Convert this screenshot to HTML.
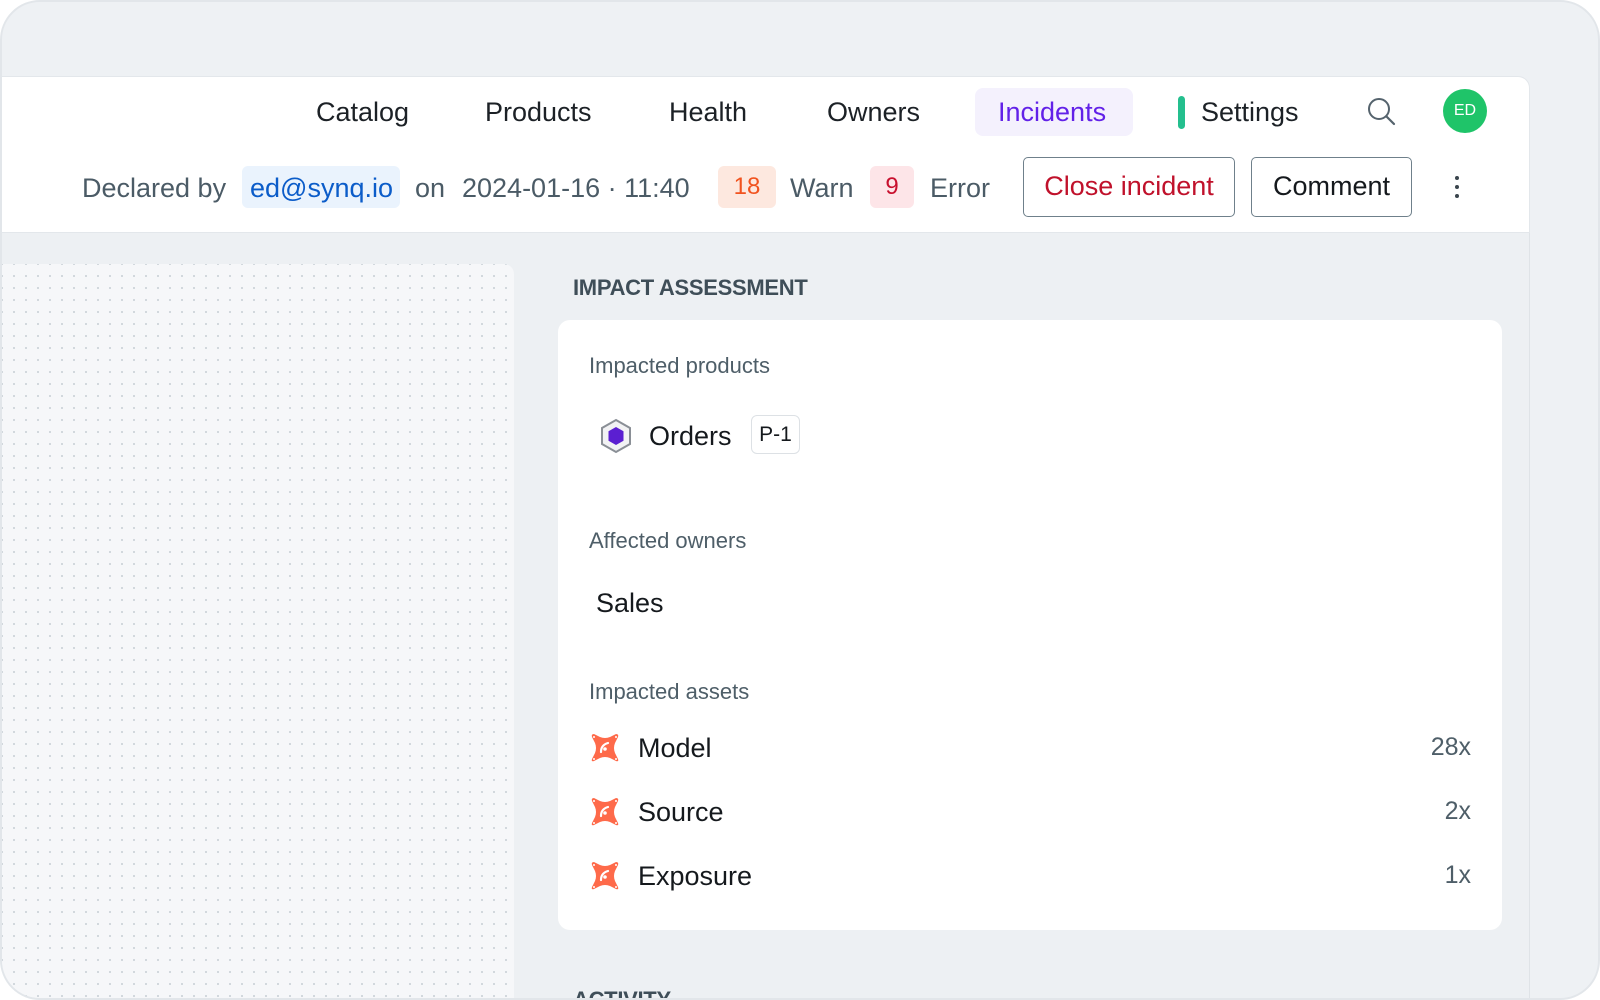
<!DOCTYPE html>
<html><head><meta charset="utf-8"><style>
*{margin:0;padding:0;box-sizing:border-box}
body{width:1600px;height:1000px;overflow:hidden;background:#fff;font-family:"Liberation Sans","DejaVu Sans",sans-serif;position:relative}
.frame{position:absolute;left:0;top:0;width:1600px;height:1000px;background:#eef1f4;border:2px solid #e2e6ea;border-radius:40px;overflow:hidden}
.wrap{position:absolute;left:-2px;top:0;width:1600px;height:1000px}
.a{position:absolute;white-space:nowrap}
.hdr{position:absolute;left:0;top:74px;width:1530px;height:157px;background:#fff;border-top:1px solid #e3e7eb;border-right:1px solid #e3e7eb;border-bottom:1px solid #e3e7eb;border-top-right-radius:12px}
.content{position:absolute;left:0;top:231px;width:1530px;height:800px;background:#edf0f3;border-right:1px solid #dfe3e7}
.nav{font-size:27px;color:#1c2126;top:94px;line-height:32px}
.r2{font-size:27px;color:#4b5b66;top:170px;line-height:32px}
.pill{position:absolute;border-radius:6px}
.btn{position:absolute;top:155px;height:60px;border:1.5px solid #6f808b;border-radius:5px;font-size:27px;line-height:57px;text-align:center}
.dots{position:absolute;left:0;top:262px;width:514px;height:760px;background-color:#f6f7f9;background-image:radial-gradient(#cfd5db 1px,transparent 1.2px);background-size:12px 12px;background-position:8px 6px;border-top-right-radius:10px}
.card{position:absolute;left:558px;top:318px;width:944px;height:610px;background:#fff;border-radius:12px}
.lab{font-size:22px;color:#4e5e68;line-height:26px}
.item{font-size:27px;color:#15191d;line-height:32px}
.cnt{font-size:25px;color:#4e5e68;line-height:30px}
.h{font-size:22px;font-weight:bold;color:#3f4e58;line-height:28px;letter-spacing:-0.3px}
</style></head><body>
<div class="frame"><div class="wrap">
<div class="hdr"></div>
<div class="content"></div>
<div class="dots"></div>

<div class="a nav" style="left:316px">Catalog</div>
<div class="a nav" style="left:485px">Products</div>
<div class="a nav" style="left:669px">Health</div>
<div class="a nav" style="left:827px">Owners</div>
<div class="pill" style="left:975px;top:86px;width:158px;height:48px;background:#f4f1fd;border-radius:8px"></div>
<div class="a nav" style="left:998px;color:#6221e8">Incidents</div>
<div class="pill" style="left:1178px;top:94px;width:7px;height:33px;background:#24bf8e;border-radius:4px"></div>
<div class="a nav" style="left:1201px">Settings</div>
<svg class="a" style="left:1366px;top:94px" width="32" height="32" viewBox="0 0 32 32"><circle cx="13" cy="13" r="10" fill="none" stroke="#55636d" stroke-width="2"/><line x1="20.5" y1="20.5" x2="28" y2="28" stroke="#55636d" stroke-width="2.2" stroke-linecap="round"/></svg>
<div class="pill" style="left:1443px;top:87px;width:44px;height:44px;background:#1fc469;border-radius:50%;color:#fff;font-size:16px;line-height:44px;text-align:center">ED</div>

<div class="a r2" style="left:82px">Declared by</div>
<div class="pill" style="left:242px;top:164px;width:158px;height:42px;background:#eaf3fd"></div>
<div class="a r2" style="left:250px;color:#0b5cc9">ed@synq.io</div>
<div class="a r2" style="left:415px">on</div>
<div class="a r2" style="left:462px">2024-01-16 · 11:40</div>
<div class="pill" style="left:718px;top:164px;width:58px;height:42px;background:#fde8df;color:#f1531f;font-size:24px;line-height:42px;text-align:center">18</div>
<div class="a r2" style="left:790px">Warn</div>
<div class="pill" style="left:870px;top:164px;width:44px;height:42px;background:#fde5e8;color:#c8102e;font-size:24px;line-height:42px;text-align:center">9</div>
<div class="a r2" style="left:930px">Error</div>
<div class="btn" style="left:1023px;width:212px;color:#c0112b">Close incident</div>
<div class="btn" style="left:1251px;width:161px;color:#15191d">Comment</div>
<svg class="a" style="left:1450px;top:172px" width="14" height="28"><circle cx="7" cy="4" r="2" fill="#3a454d"/><circle cx="7" cy="13" r="2" fill="#3a454d"/><circle cx="7" cy="22" r="2" fill="#3a454d"/></svg>

<div class="a h" style="left:573px;top:272px">IMPACT ASSESSMENT</div>
<div class="card"></div>
<div class="a lab" style="left:589px;top:351px">Impacted products</div>
<svg class="a" style="left:599px;top:416px" width="34" height="36" viewBox="0 0 34 36"><polygon points="17,2 31,10 31,26 17,34 3,26 3,10" fill="#f2f2f4" stroke="#8a8f96" stroke-width="2"/><polygon points="17,9 24.5,13.3 24.5,22.7 17,27 9.5,22.7 9.5,13.3" fill="#5b1fd1"/></svg>
<div class="a item" style="left:649px;top:418px">Orders</div>
<div class="pill" style="left:751px;top:413px;width:49px;height:39px;border:1.5px solid #dde1e5;font-size:21px;line-height:38px;text-align:center;color:#15191d">P-1</div>

<div class="a lab" style="left:589px;top:526px">Affected owners</div>
<div class="a item" style="left:596px;top:585px">Sales</div>

<div class="a lab" style="left:589px;top:677px">Impacted assets</div>

<svg width="0" height="0" style="position:absolute"><defs><g id="dbt"><path d="M3 5 Q2 2 5 2 L11 5 Q16 7 21 5 L27 2 Q30 2 29 5 L26 11 Q24 16 26 21 L29 27 Q30 30 27 29 L21 26 Q16 24 11 26 L5 29 Q2 30 3 27 L6 21 Q8 16 6 11 Z" fill="#fe6a4a"/><path d="M12 20 Q12 13 19 11" stroke="#fff" stroke-width="2.2" fill="none" stroke-linecap="round"/><circle cx="16" cy="17" r="1.8" fill="#fff"/><circle cx="5" cy="5" r="1" fill="#fff"/><circle cx="27" cy="5" r="1" fill="#fff"/><circle cx="5" cy="27" r="1" fill="#fff"/><circle cx="27" cy="27" r="1" fill="#fff"/></g></defs></svg>
<svg class="a" style="left:589px;top:730px" width="32" height="32"><use href="#dbt"/></svg>
<div class="a item" style="left:638px;top:730px">Model</div>
<div class="a cnt" style="right:129px;top:730px">28x</div>
<svg class="a" style="left:589px;top:794px" width="32" height="32"><use href="#dbt"/></svg>
<div class="a item" style="left:638px;top:794px">Source</div>
<div class="a cnt" style="right:129px;top:794px">2x</div>
<svg class="a" style="left:589px;top:858px" width="32" height="32"><use href="#dbt"/></svg>
<div class="a item" style="left:638px;top:858px">Exposure</div>
<div class="a cnt" style="right:129px;top:858px">1x</div>

<div class="a h" style="left:573px;top:984px">ACTIVITY</div>
</div></div>
</body></html>
